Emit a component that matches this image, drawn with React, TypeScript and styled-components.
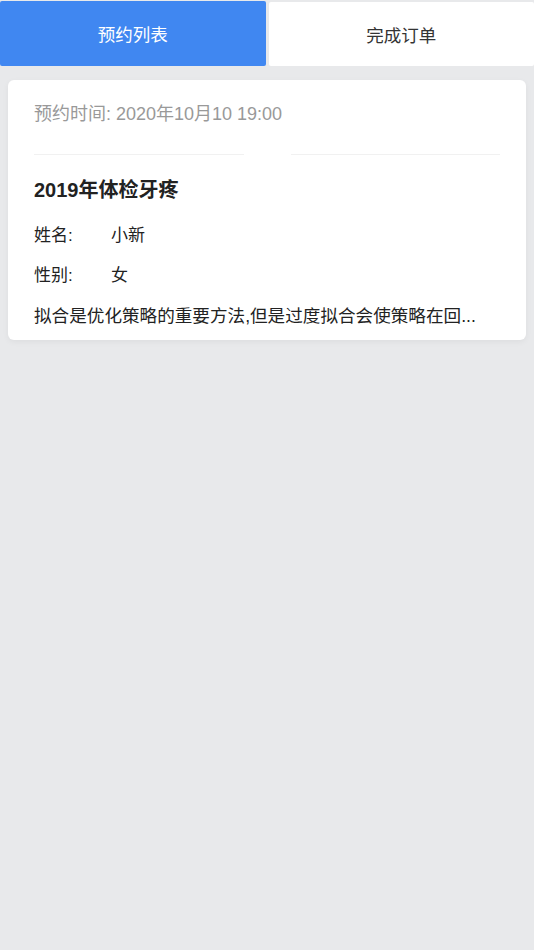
import React from "react";
import styled, { createGlobalStyle } from "styled-components";

const Global = createGlobalStyle`
  html, body {
    margin: 0;
    padding: 0;
    background: #e8e9eb;
    font-family: "Liberation Sans", "Noto Sans CJK SC", sans-serif;
  }
  #root { min-height: 950px; background: #e8e9eb; }
`;

const Tabs = styled.div`
  display: flex;
  gap: 3px;
  height: 66px;
  padding-top: 1px;
  box-sizing: border-box;
`;

const Tab = styled.div<{ $active?: boolean }>`
  flex: 1;
  display: flex;
  align-items: center;
  justify-content: center;
  border-radius: 2px;
  margin-top: ${(p) => (p.$active ? "0" : "1px")};
  background: ${(p) => (p.$active ? "#4087f1" : "#ffffff")};
  color: ${(p) => (p.$active ? "#ffffff" : "#333333")};
  font-size: 17.5px;
`;

const Card = styled.div`
  margin: 14px 8px 0;
  background: #fff;
  border-radius: 6px;
  padding: 22px 26px 12px;
  box-shadow: 0 2px 6px rgba(0, 0, 0, 0.05);
`;

const DateLine = styled.div`
  font-size: 18px;
  line-height: 24px;
  color: #999;
`;

const Dividers = styled.div`
  display: flex;
  gap: 47px;
  margin-top: 28px;
`;

const Line = styled.div`
  flex: 1;
  height: 1px;
  background: #f1f1f1;
`;

const Title = styled.div`
  margin-top: 21px;
  font-size: 20px;
  line-height: 28px;
  font-weight: 700;
  color: #222;
`;

const Row = styled.div<{ $gap: number }>`
  display: flex;
  margin-top: ${(p) => p.$gap}px;
  font-size: 17px;
  line-height: 24px;
  color: #222;
`;

const Label = styled.span`
  width: 77px;
  flex-shrink: 0;
`;

const Desc = styled.div`
  margin-top: 16px;
  font-size: 17.6px;
  line-height: 24px;
  color: #222;
  white-space: nowrap;
`;

export default function App() {
  return (
    <>
      <Global />
      <Tabs>
        <Tab $active>预约列表</Tab>
        <Tab>完成订单</Tab>
      </Tabs>
      <Card>
        <DateLine>预约时间: 2020年10月10 19:00</DateLine>
        <Dividers>
          <Line />
          <Line />
        </Dividers>
        <Title>2019年体检牙疼</Title>
        <Row $gap={20}>
          <Label>姓名:</Label>
          <span>小新</span>
        </Row>
        <Row $gap={16}>
          <Label>性别:</Label>
          <span>女</span>
        </Row>
        <Desc>拟合是优化策略的重要方法,但是过度拟合会使策略在回...</Desc>
      </Card>
    </>
  );
}
